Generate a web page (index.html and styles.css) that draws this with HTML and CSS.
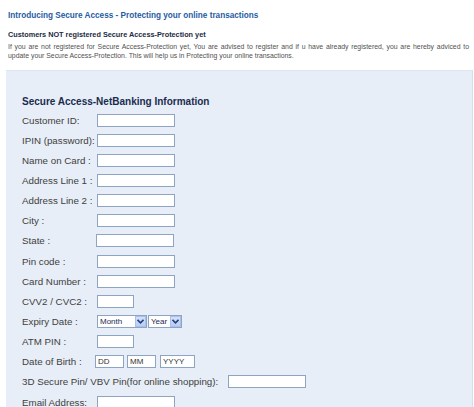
FILE: index.html
```html
<!DOCTYPE html>
<html>
<head>
<meta charset="utf-8">
<link rel="stylesheet" href="styles.css">
</head>
<body>
<div class="intro">
  <h1 class="title">Introducing Secure Access - Protecting your online transactions</h1>
  <h2 class="subtitle">Customers NOT registered Secure Access-Protection yet</h2>
  <p class="notice">If you are not registered for Secure Access-Protection yet, You are advised to register and if u have already registered, you are hereby adviced to update your Secure Access-Protection. This will help us in Protecting your online transactions.</p>
</div>
<div class="panel">
  <h3 class="panel-title">Secure Access-NetBanking Information</h3>
  <div class="row"><span class="label">Customer ID:</span><span class="field"></span></div>
  <div class="row"><span class="label">IPIN (password):</span><span class="field"></span></div>
  <div class="row"><span class="label">Name on Card :</span><span class="field"></span></div>
  <div class="row"><span class="label">Address Line 1 :</span><span class="field"></span></div>
  <div class="row"><span class="label">Address Line 2 :</span><span class="field"></span></div>
  <div class="row"><span class="label">City :</span><span class="field"></span></div>
  <div class="row"><span class="label">State :</span><span class="field field-shift"></span></div>
  <div class="row"><span class="label">Pin code :</span><span class="field"></span></div>
  <div class="row"><span class="label">Card Number :</span><span class="field"></span></div>
  <div class="row"><span class="label">CVV2 / CVC2 :</span><span class="field field-short"></span></div>
  <div class="row"><span class="label">Expiry Date :</span>
    <span class="select select-month"><span class="select-text">Month</span><span class="select-btn"><svg width="7" height="5" viewBox="0 0 7 5"><path d="M0.5 0.8 L3.5 3.8 L6.5 0.8" fill="none" stroke="#24427a" stroke-width="1.6"/></svg></span></span>
    <span class="select select-year"><span class="select-text">Year</span><span class="select-btn"><svg width="7" height="5" viewBox="0 0 7 5"><path d="M0.5 0.8 L3.5 3.8 L6.5 0.8" fill="none" stroke="#24427a" stroke-width="1.6"/></svg></span></span>
  </div>
  <div class="row"><span class="label">ATM PIN :</span><span class="field field-short"></span></div>
  <div class="row"><span class="label label-dob">Date of Birth :</span><span class="field field-dd">DD</span><span class="field field-dd">MM</span><span class="field field-yyyy">YYYY</span></div>
  <div class="row"><span class="label label-wide">3D Secure Pin/ VBV Pin(for online shopping):</span><span class="field"></span></div>
  <div class="row"><span class="label">Email Address:</span><span class="field"></span></div>
</div>
</body>
</html>
```

FILE: styles.css
```css
html, body {
  margin: 0;
  padding: 0;
  background: #ffffff;
  font-family: "Liberation Sans", Arial, sans-serif;
}

.intro {
  padding: 10px 5px 0 8px;
}

.title {
  margin: 0;
  font-size: 8.2px;
  font-weight: bold;
  color: #1f5ca3;
  line-height: 12px;
}

.subtitle {
  margin: 8px 0 0 0;
  font-size: 7.3px;
  font-weight: bold;
  color: #1b2b45;
  line-height: 10px;
}

.notice {
  margin: 2px 0 0 0;
  font-size: 6.88px;
  line-height: 9px;
  color: #505050;
  text-align: justify;
}

.panel {
  margin: 10px 0 0 6px;
  width: 450px;
  height: 360px;
  padding: 24px 0 0 16px;
  background: #e8eef7;
  border-top: 1px solid #dfe6ef;
  border-right: 1px solid #d6dee9;
}

.panel-title {
  margin: 0 0 1px 0;
  font-size: 10px;
  font-weight: bold;
  color: #1a2c4e;
  line-height: 14px;
}

.row {
  display: flex;
  align-items: center;
  height: 20.15px;
}

.label {
  width: 75px;
  flex: none;
  font-size: 9.75px;
  color: #3e3e3e;
  white-space: nowrap;
}

.label-dob {
  width: 73px;
}

.label-wide {
  width: auto;
  margin-right: 10px;
}

.field {
  box-sizing: border-box;
  width: 78px;
  height: 13px;
  background: #ffffff;
  border: 1px solid #8da5c3;
  font-size: 8px;
  line-height: 11px;
  color: #333;
  padding-left: 2px;
}

.field-shift {
  margin-left: -1px;
}

.field-short {
  width: 37px;
}

.field-dd {
  width: 29px;
  margin-right: 3px;
}

.field-yyyy {
  width: 35px;
  margin-left: 1px;
}

.select {
  box-sizing: border-box;
  display: flex;
  align-items: center;
  height: 13px;
  background: #ffffff;
  border: 1px solid #8da5c3;
  font-size: 8px;
  color: #1e2a52;
}

.select-month {
  width: 50px;
}

.select-year {
  width: 34px;
  margin-left: 1px;
}

.select-text {
  flex: 1;
  padding-left: 2px;
}

.select-btn {
  box-sizing: border-box;
  width: 11px;
  height: 11px;
  display: flex;
  align-items: center;
  justify-content: center;
  background: linear-gradient(#d4e1fb, #b8cdf5);
  border: 1px solid #aac0ec;
}
```
